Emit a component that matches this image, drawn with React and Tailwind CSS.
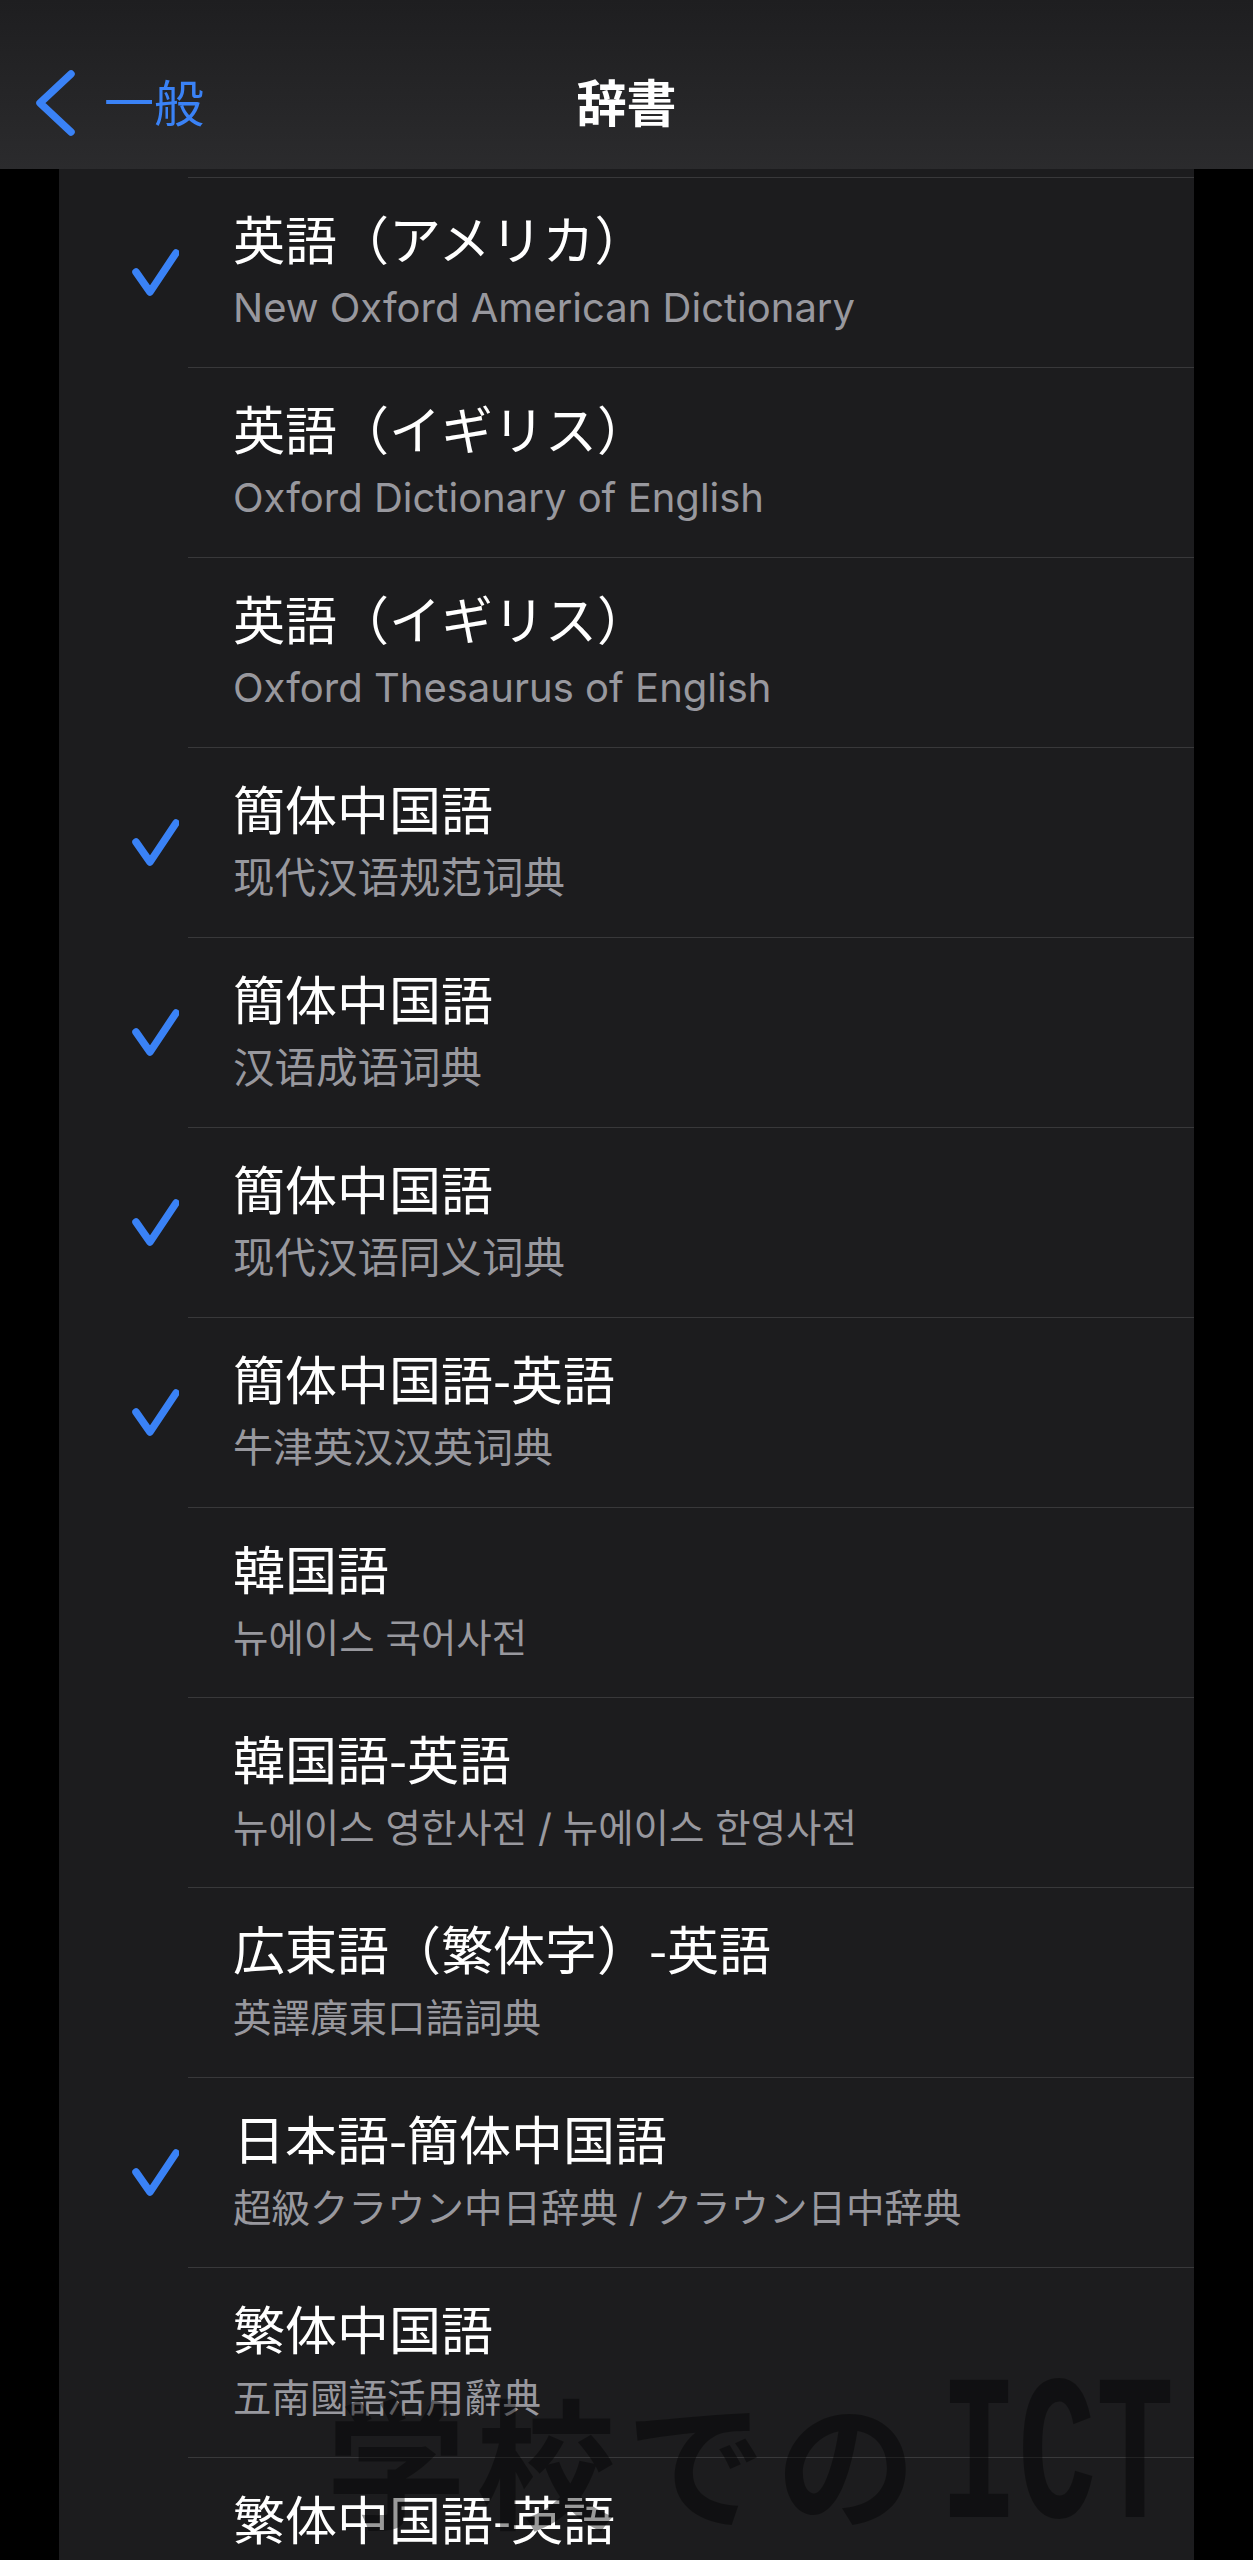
import React from 'react';

const jp = '"Noto Sans CJK JP", sans-serif';

// subtitle sizes follow the reference: SC dictionaries render a little larger than the others
const rows = [
  { on: true, title: '英語（アメリカ）', sub: 'New Oxford American Dictionary', font: '"Inter", "Noto Sans CJK JP", sans-serif', size: 'text-[40px]' },
  { on: false, title: '英語（イギリス）', sub: 'Oxford Dictionary of English', font: '"Inter", "Noto Sans CJK JP", sans-serif', size: 'text-[40px]' },
  { on: false, title: '英語（イギリス）', sub: 'Oxford Thesaurus of English', font: '"Inter", "Noto Sans CJK JP", sans-serif', size: 'text-[40px]' },
  { on: true, title: '簡体中国語', sub: '现代汉语规范词典', font: '"Inter", "Noto Sans CJK SC", sans-serif', size: 'text-[41.5px]' },
  { on: true, title: '簡体中国語', sub: '汉语成语词典', font: '"Inter", "Noto Sans CJK SC", sans-serif', size: 'text-[41.5px]' },
  { on: true, title: '簡体中国語', sub: '现代汉语同义词典', font: '"Inter", "Noto Sans CJK SC", sans-serif', size: 'text-[41.5px]' },
  { on: true, title: '簡体中国語-英語', sub: '牛津英汉汉英词典', font: '"Inter", "Noto Sans CJK SC", sans-serif', size: 'text-[40px]' },
  { on: false, title: '韓国語', sub: '뉴에이스 국어사전', font: '"Inter", "Noto Sans CJK KR", sans-serif', size: 'text-[38.5px]' },
  { on: false, title: '韓国語-英語', sub: '뉴에이스 영한사전 / 뉴에이스 한영사전', font: '"Inter", "Noto Sans CJK KR", sans-serif', size: 'text-[38.5px]' },
  { on: false, title: '広東語（繁体字）-英語', sub: '英譯廣東口語詞典', font: '"Inter", "Noto Sans CJK TC", sans-serif', size: 'text-[38.5px]' },
  { on: true, title: '日本語-簡体中国語', sub: '超級クラウン中日辞典 / クラウン日中辞典', font: '"Inter", "Noto Sans CJK JP", sans-serif', size: 'text-[38.5px]' },
  { on: false, title: '繁体中国語', sub: '五南國語活用辭典', font: '"Inter", "Noto Sans CJK TC", sans-serif', size: 'text-[38.5px]' },
  { on: false, title: '繁体中国語-英語', sub: '', font: '"Inter", "Noto Sans CJK TC", sans-serif', size: 'text-[38.5px]' },
];

const Check = () => (
  <svg width="48" height="48" viewBox="0 0 48 48" fill="none">
    <path d="M5 24 L19 44 L45 5" stroke="#3a82f6" strokeWidth="7.5" strokeLinecap="round" strokeLinejoin="round" />
  </svg>
);

const Row = ({ row }) => (
  <div className="flex h-[190px]">
    <div className="w-[129px] flex items-center pl-[72px]">
      {row.on && <Check />}
    </div>
    <div className="flex-1 border-t border-[#38383a] pl-[45px] pt-[32px] flex flex-col">
      <div className="text-[52px] leading-[56px] text-white whitespace-nowrap" style={{ fontFamily: jp }}>
        {row.title}
      </div>
      <div className={`mt-[18px] ${row.size} leading-[48px] text-[#98989e] whitespace-nowrap`} style={{ fontFamily: row.font }}>
        {row.sub}
      </div>
    </div>
  </div>
);

export default function App() {
  return (
    <div className="relative w-[1253px] h-[2560px] overflow-hidden bg-black" style={{ fontFamily: jp }}>
      <header className="h-[169px] bg-linear-to-b from-[#1e1e20] to-[#2b2b2d] grid grid-cols-[1fr_auto_1fr] items-start pt-[70px]">
        <div className="flex items-start">
          <svg className="ml-[36px]" width="40" height="66" viewBox="0 0 40 66" fill="none">
            <path d="M35 4 L4 33 L35 62" stroke="#3a82f6" strokeWidth="7.5" strokeLinecap="round" strokeLinejoin="round" />
          </svg>
          <span className="ml-[28px] text-[50px] leading-[60px] text-[#3a82f6]">一般</span>
        </div>
        <h1 className="text-[50px] leading-[60px] font-bold text-white">辞書</h1>
        <div />
      </header>

      <div className="flex">
        <div className="w-[59px] shrink-0" />
        <main className="w-[1135px] shrink-0 bg-[#1c1c1e] pt-[8px]">
          {rows.map((row, i) => (
            <Row key={i} row={row} />
          ))}
        </main>
      </div>

      {/* watermark over the bottom of the list */}
      <div className="absolute left-[326px] top-[2387px] flex items-baseline text-black/40 whitespace-nowrap pointer-events-none">
        <span className="text-[140px] leading-[140px] font-bold tracking-[10px]" style={{ fontFamily: jp }}>
          学校での
        </span>
        <span
          className="ml-[14px] inline-block text-[130px] leading-[130px] font-bold scale-y-[1.6] origin-[center_100px]"
          style={{ fontFamily: '"Liberation Mono", monospace' }}
        >
          ICT
        </span>
      </div>
    </div>
  );
}
